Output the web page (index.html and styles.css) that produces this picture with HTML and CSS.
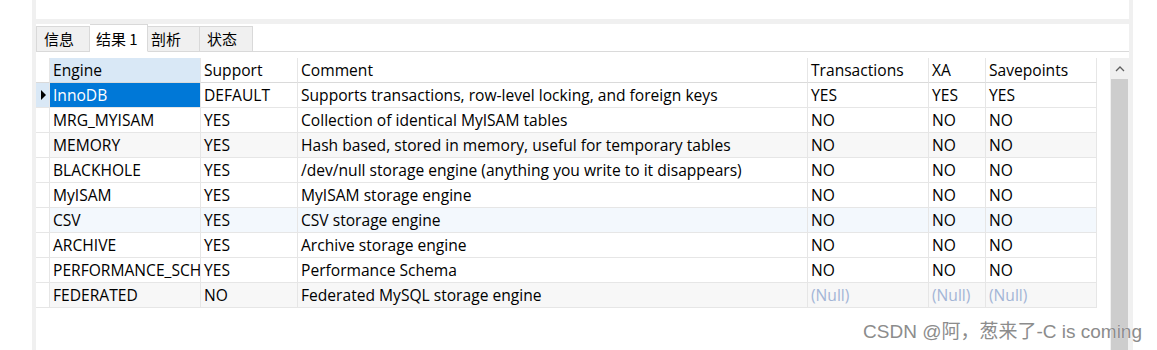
FILE: index.html
```html
<!DOCTYPE html>
<html>

<head>
    <title>Result 1</title>
    <link rel="stylesheet" href="styles.css">
</head>

<body>
    <div class="window">
        <div class="toolbar"></div>
        <div class="sep"></div>

        <!-- Tabs -->
        <div class="tabs">
            <div class="tab">信息</div>
            <div class="tab active">结果 1</div>
            <div class="tab">剖析</div>
            <div class="tab">状态</div>
        </div>

        <div class="content">
            <div class="grid-area">
                <div class="grid">
                    <div class="row head">
                        <div class="cell ind"></div>
                        <div class="cell sorted">Engine</div>
                        <div class="cell">Support</div>
                        <div class="cell">Comment</div>
                        <div class="cell">Transactions</div>
                        <div class="cell">XA</div>
                        <div class="cell">Savepoints</div>
                    </div>
                    <div class="row">
                        <div class="cell ind current"><span class="arrow"></span></div>
                        <div class="cell selected">InnoDB</div>
                        <div class="cell">DEFAULT</div>
                        <div class="cell">Supports transactions, row-level locking, and foreign keys</div>
                        <div class="cell">YES</div>
                        <div class="cell">YES</div>
                        <div class="cell">YES</div>
                    </div>
                    <div class="row">
                        <div class="cell ind"></div>
                        <div class="cell">MRG_MYISAM</div>
                        <div class="cell">YES</div>
                        <div class="cell">Collection of identical MyISAM tables</div>
                        <div class="cell">NO</div>
                        <div class="cell">NO</div>
                        <div class="cell">NO</div>
                    </div>
                    <div class="row alt">
                        <div class="cell ind"></div>
                        <div class="cell">MEMORY</div>
                        <div class="cell">YES</div>
                        <div class="cell">Hash based, stored in memory, useful for temporary tables</div>
                        <div class="cell">NO</div>
                        <div class="cell">NO</div>
                        <div class="cell">NO</div>
                    </div>
                    <div class="row">
                        <div class="cell ind"></div>
                        <div class="cell">BLACKHOLE</div>
                        <div class="cell">YES</div>
                        <div class="cell">/dev/null storage engine (anything you write to it disappears)</div>
                        <div class="cell">NO</div>
                        <div class="cell">NO</div>
                        <div class="cell">NO</div>
                    </div>
                    <div class="row">
                        <div class="cell ind"></div>
                        <div class="cell">MyISAM</div>
                        <div class="cell">YES</div>
                        <div class="cell">MyISAM storage engine</div>
                        <div class="cell">NO</div>
                        <div class="cell">NO</div>
                        <div class="cell">NO</div>
                    </div>
                    <div class="row hover">
                        <div class="cell ind"></div>
                        <div class="cell">CSV</div>
                        <div class="cell">YES</div>
                        <div class="cell">CSV storage engine</div>
                        <div class="cell">NO</div>
                        <div class="cell">NO</div>
                        <div class="cell">NO</div>
                    </div>
                    <div class="row">
                        <div class="cell ind"></div>
                        <div class="cell">ARCHIVE</div>
                        <div class="cell">YES</div>
                        <div class="cell">Archive storage engine</div>
                        <div class="cell">NO</div>
                        <div class="cell">NO</div>
                        <div class="cell">NO</div>
                    </div>
                    <div class="row">
                        <div class="cell ind"></div>
                        <div class="cell">PERFORMANCE_SCHEMA</div>
                        <div class="cell">YES</div>
                        <div class="cell">Performance Schema</div>
                        <div class="cell">NO</div>
                        <div class="cell">NO</div>
                        <div class="cell">NO</div>
                    </div>
                    <div class="row alt">
                        <div class="cell ind"></div>
                        <div class="cell">FEDERATED</div>
                        <div class="cell">NO</div>
                        <div class="cell">Federated MySQL storage engine</div>
                        <div class="cell null">(Null)</div>
                        <div class="cell null">(Null)</div>
                        <div class="cell null">(Null)</div>
                    </div>
                </div>
            </div>

            <div class="scrollbar">
                <div class="scroll-up">
                    <svg width="10" height="6" viewBox="0 0 10 6">
                        <path d="M1 5 L5 1 L9 5" fill="none" stroke="#606060" stroke-width="1.3" />
                    </svg>
                </div>
                <div class="thumb"></div>
            </div>
        </div>

        <div class="watermark">CSDN @阿，葱来了-C is coming</div>
    </div>
</body>

</html>
```

FILE: styles.css
```css
* {
    margin: 0;
    padding: 0;
    box-sizing: border-box;
}

body {
    font-family: 'Open Sans', 'Noto Sans CJK SC', sans-serif;
    background-color: #ffffff;
    color: #000000;
    overflow: hidden;
}

.window {
    position: relative;
    margin-left: 32px;
    width: 1101px;
    height: 350px;
    border-left: 4px solid #f0f0f0;
    border-right: 4px solid #f0f0f0;
    display: flex;
    flex-direction: column;
}

.toolbar {
    height: 19px;
    background: #ffffff;
}

.sep {
    height: 5px;
    background: #f0f0f0;
}

/* Tabs */
.tabs {
    height: 28px;
    display: flex;
    align-items: flex-end;
    border-bottom: 1px solid #dadada;
}

.tab {
    height: 26px;
    margin-bottom: -1px;
    padding: 0 7px;
    background: #f0f0f0;
    border: 1px solid #d9d9d9;
    border-left: none;
    font-family: 'Noto Sans CJK SC', sans-serif;
    font-size: 15px;
    line-height: 24px;
    color: #000000;
}

.tab:first-child {
    width: 54px;
    border-left: 1px solid #d9d9d9;
}

.tab:nth-child(3) {
    width: 52px;
    padding-left: 3px;
}

.tab:nth-child(4) {
    width: 53px;
}

.tab.active {
    width: 58px;
    height: 28px;
    padding: 0 6px;
    background: #ffffff;
    border-bottom-color: #ffffff;
    line-height: 27px;
}

/* Grid */
.content {
    flex: 1;
    display: flex;
    min-height: 0;
}

.grid-area {
    flex: 1;
    padding-top: 6px;
}

.row {
    display: grid;
    grid-template-columns: 14px 151px 97px 510px 121px 57px 111px;
    height: 25px;
}

.cell {
    border-right: 1px solid #e6e6e6;
    border-bottom: 1px solid #e6e6e6;
    padding-left: 3px;
    font-size: 15.6px;
    line-height: 24px;
    white-space: nowrap;
    overflow: hidden;
}

.head .cell {
    border-bottom-color: #dadada;
}

.cell.sorted {
    background: #d9e8f6;
}

.cell.ind {
    padding: 0;
    display: flex;
    align-items: center;
    justify-content: center;
}

.cell.current {
    background: #d9e8f6;
}

.arrow {
    width: 0;
    height: 0;
    border-top: 5px solid transparent;
    border-bottom: 5px solid transparent;
    border-left: 5px solid #000000;
    margin-left: 1px;
}

.cell.selected {
    background: #0078d7;
    color: #ffffff;
}

.row.alt .cell:not(.ind) {
    background: #f7f7f7;
}

.row.hover .cell:not(.ind) {
    background: #f3f8fd;
}

.cell.null {
    color: #a3b5d6;
}

/* Scrollbar */
.scrollbar {
    width: 19px;
    margin-top: 6px;
    background: #f0f0f0;
    display: flex;
    flex-direction: column;
}

.scroll-up {
    height: 21px;
    display: flex;
    align-items: center;
    justify-content: center;
}

.thumb {
    flex: 1;
    background: #cdcdcd;
    margin: 0 1px;
}

.watermark {
    position: absolute;
    right: -13px;
    bottom: 7px;
    font-family: 'Liberation Sans', 'Noto Sans CJK SC', sans-serif;
    font-size: 19px;
    color: #8c8c8c;
    text-shadow: 0 0 1px #ffffff;
    white-space: nowrap;
}
```
